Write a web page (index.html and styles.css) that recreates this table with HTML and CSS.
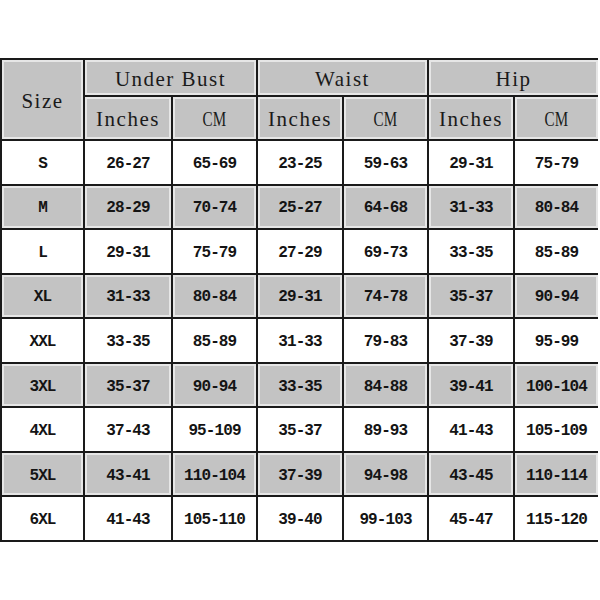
FILE: index.html
```html
<!DOCTYPE html>
<html>
<head>
<meta charset="utf-8">
<link rel="stylesheet" href="styles.css">
</head>
<body>
<div class="chart">
  <div class="cell head size">Size</div>
  <div class="cell head group g1">Under Bust</div>
  <div class="cell head group g2">Waist</div>
  <div class="cell head group g3">Hip</div>
  <div class="cell head sub">Inches</div><div class="cell head sub"><span class="cm">CM</span></div>
  <div class="cell head sub">Inches</div><div class="cell head sub"><span class="cm">CM</span></div>
  <div class="cell head sub">Inches</div><div class="cell head sub"><span class="cm">CM</span></div>

  <div class="cell">S</div><div class="cell">26-27</div><div class="cell">65-69</div><div class="cell">23-25</div><div class="cell">59-63</div><div class="cell">29-31</div><div class="cell">75-79</div>
  <div class="cell grey">M</div><div class="cell grey">28-29</div><div class="cell grey">70-74</div><div class="cell grey">25-27</div><div class="cell grey">64-68</div><div class="cell grey">31-33</div><div class="cell grey">80-84</div>
  <div class="cell">L</div><div class="cell">29-31</div><div class="cell">75-79</div><div class="cell">27-29</div><div class="cell">69-73</div><div class="cell">33-35</div><div class="cell">85-89</div>
  <div class="cell grey">XL</div><div class="cell grey">31-33</div><div class="cell grey">80-84</div><div class="cell grey">29-31</div><div class="cell grey">74-78</div><div class="cell grey">35-37</div><div class="cell grey">90-94</div>
  <div class="cell">XXL</div><div class="cell">33-35</div><div class="cell">85-89</div><div class="cell">31-33</div><div class="cell">79-83</div><div class="cell">37-39</div><div class="cell">95-99</div>
  <div class="cell grey">3XL</div><div class="cell grey">35-37</div><div class="cell grey">90-94</div><div class="cell grey">33-35</div><div class="cell grey">84-88</div><div class="cell grey">39-41</div><div class="cell grey">100-104</div>
  <div class="cell">4XL</div><div class="cell">37-43</div><div class="cell">95-109</div><div class="cell">35-37</div><div class="cell">89-93</div><div class="cell">41-43</div><div class="cell">105-109</div>
  <div class="cell grey">5XL</div><div class="cell grey">43-41</div><div class="cell grey">110-104</div><div class="cell grey">37-39</div><div class="cell grey">94-98</div><div class="cell grey">43-45</div><div class="cell grey">110-114</div>
  <div class="cell">6XL</div><div class="cell">41-43</div><div class="cell">105-110</div><div class="cell">39-40</div><div class="cell">99-103</div><div class="cell">45-47</div><div class="cell">115-120</div>
</div>
</body>
</html>
```
FILE: styles.css
```css
html, body {
  margin: 0;
  padding: 0;
  background: #ffffff;
}
body {
  padding-top: 58px;
}
.chart {
  width: 598px;
  box-sizing: border-box;
  display: grid;
  grid-template-columns: 81px 86px 83px 84px 83px 84px 83px;
  grid-template-rows: 35px 42px repeat(9, 42.55px);
  gap: 2px;
  padding: 2px;
  background: #1a1a1a;
  font-family: "Liberation Mono", "Courier New", monospace;
  color: #141414;
}
.cell {
  background: #ffffff;
  display: flex;
  align-items: center;
  justify-content: center;
  font-size: 16px;
  font-weight: bold;
  letter-spacing: -0.9px;
  padding-top: 3px;
  box-sizing: border-box;
}
.grey, .head {
  background: #c3c3c3;
  box-shadow: inset 0 0 0 2px #e6e6e6;
}
.head {
  font-family: "Liberation Serif", "Times New Roman", serif;
  font-weight: normal;
  font-size: 21px;
  letter-spacing: 1.5px;
  color: #1a1a1a;
}
.cm {
  display: inline-block;
  letter-spacing: 0;
  transform: scaleX(0.72);
}
.size {
  grid-row: 1 / span 2;
  grid-column: 1;
}
.g1 { grid-column: 2 / span 2; }
.g2 { grid-column: 4 / span 2; }
.g3 { grid-column: 6 / span 2; }
```
